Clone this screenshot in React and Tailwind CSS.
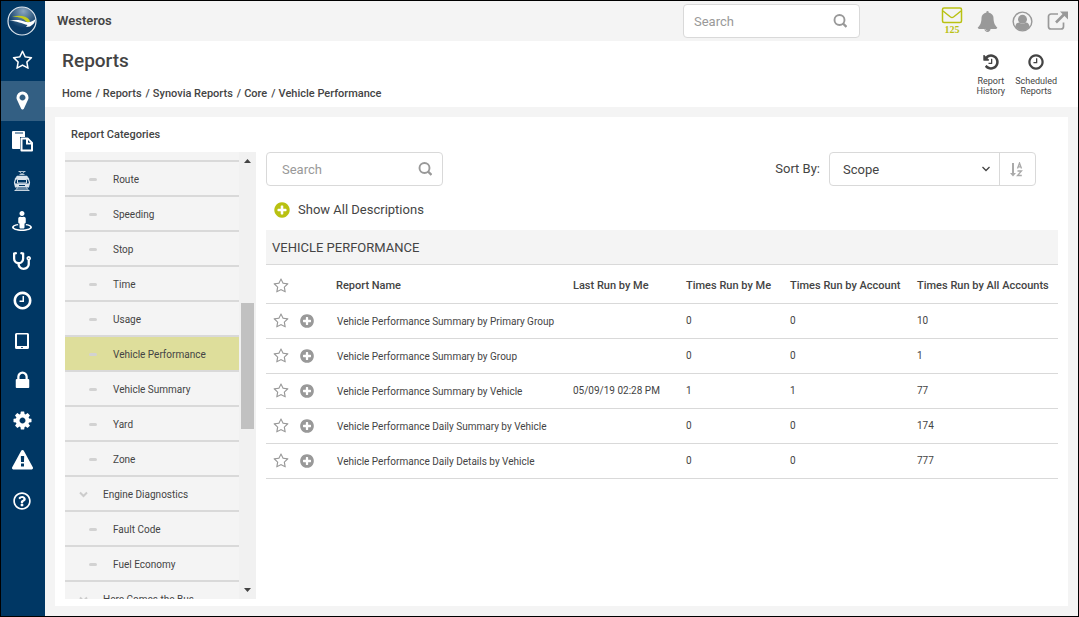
import React from "react";
import { FaStreetView, FaStethoscope, FaRegQuestionCircle } from "react-icons/fa";

const paths = {
  star: "M1137 1004l306-297-422-62-189-382-189 382-422 62 306 297-73 421 378-199 377 199zm527-357q0 22-26 48l-363 354 86 500q1 7 1 20 0 50-41 50-19 0-40-12l-449-236-449 236q-22 12-40 12-21 0-31.5-14.5t-10.5-35.5q0-6 2-20l86-500-364-354q-25-27-25-48 0-37 56-46l502-73 225-455q19-41 49-41t49 41l225 455 502 73q56 9 56 46z",
  marker: "M1152 640q0-106-75-181t-181-75-181 75-75 181 75 181 181 75 181-75 75-181zm256 0q0 109-33 179l-364 774q-16 33-47.5 52t-67.5 19-67.5-19-46.5-52l-365-774q-33-70-33-179 0-212 150-362t362-150 362 150 150 362z",
  clock: "M1024 544v448q0 14-9 23t-23 9h-320q-14 0-23-9t-9-23v-64q0-14 9-23t23-9h224v-352q0-14 9-23t23-9h64q14 0 23 9t9 23zm416 352q0-148-73-273t-198-198-273-73-273 73-198 198-73 273 73 273 198 198 273 73 273-73 198-198 73-273zm224 0q0 209-103 385.5t-279.5 279.5-385.5 103-385.5-103-279.5-279.5-103-385.5 103-385.5 279.5-279.5 385.5-103 385.5 103 279.5 279.5 103 385.5z",
  lock: "M640 768h512v-192q0-106-75-181t-181-75-181 75-75 181v192zm832 96v576q0 40-28 68t-68 28h-960q-40 0-68-28t-28-68v-576q0-40 28-68t68-28h32v-192q0-184 132-316t316-132 316 132 132 316v192h32q40 0 68 28t28 68z",
  plus: "M1344 960v-128q0-26-19-45t-45-19h-256v-256q0-26-19-45t-45-19h-128q-26 0-45 19t-19 45v256h-256q-26 0-45 19t-19 45v128q0 26 19 45t45 19h256v256q0 26 19 45t45 19h128q26 0 45-19t19-45v-256h256q26 0 45-19t19-45zm320-64q0 209-103 385.5t-279.5 279.5-385.5 103-385.5-103-279.5-279.5-103-385.5 103-385.5 279.5-279.5 385.5-103 385.5 103 279.5 279.5 103 385.5z",
  cog: "M1152 896q0-106-75-181t-181-75-181 75-75 181 75 181 181 75 181-75 75-181zm512-109v222q0 12-8 23t-20 13l-185 28q-19 54-39 91 35 50 107 138 10 12 10 25t-9 23q-27 37-99 108t-94 71q-12 0-26-9l-138-108q-44 23-91 38-16 136-29 186-7 28-36 28h-222q-14 0-24.5-8.5t-11.5-21.5l-28-184q-49-16-90-37l-141 107q-10 9-25 9-14 0-25-11-126-114-165-168-7-10-7-23 0-12 8-23 15-21 51-66.5t54-70.5q-27-50-41-99l-183-27q-13-2-21-12.5t-8-23.5v-222q0-12 8-23t19-13l186-28q14-46 39-92-40-57-107-138-10-12-10-24 0-10 9-23 26-36 98.5-107.5t94.5-71.5q13 0 26 10l138 107q44-23 91-38 16-136 29-186 7-28 36-28h222q14 0 24.5 8.5t11.5 21.5l28 184q49 16 90 37l142-107q9-9 24-9 13 0 25 10 129 119 165 170 7 8 7 22 0 12-8 23-15 21-51 66.5t-54 70.5q26 50 41 98l183 28q13 2 21 12.5t8 23.5z",
  history: "M1664 896q0 156-61 298t-164 245-245 164-298 61q-172 0-327-72.5t-264-204.5q-7-10-6.5-22.5t8.5-20.5l137-138q10-9 25-9 16 2 23 12 73 95 179 147t225 52q104 0 198.5-40.5t163.5-109.5 109.5-163.5 40.5-198.5-40.5-198.5-109.5-163.5-163.5-109.5-198.5-40.5q-98 0-188 35.5t-160 101.5l137 138q31 30 14 69-17 40-59 40h-448q-26 0-45-19t-19-45v-448q0-42 40-59 39-17 69 14l130 129q107-101 244.5-156.5t284.5-55.5q156 0 298 61t245 164 164 245 61 298zm-640-288v448q0 14-9 23t-23 9h-320q-14 0-23-9t-9-23v-64q0-14 9-23t23-9h224v-352q0-14 9-23t23-9h64q14 0 23 9t9 23z",
  warning: "M1024 1375v-190q0-14-9.5-23.5t-22.5-9.5h-192q-13 0-22.5 9.5t-9.5 23.5v190q0 14 9.5 23.5t22.5 9.5h192q13 0 22.5-9.5t9.5-23.5zm-2-374l18-459q0-12-10-19-13-11-24-11h-220q-11 0-24 11-10 7-10 21l17 457q0 10 10 16.5t24 6.5h185q14 0 23.5-6.5t10.5-16.5zm-14-934l768 1408q35 63-2 126-17 29-46.5 46t-63.5 17h-1536q-34 0-63.5-17t-46.5-46q-37-63-2-126l768-1408q17-31 47-49t65-18 65 18 47 49z",
  bell: "M912 1696q0-16-16-16-59 0-101.5-42.5t-42.5-101.5q0-16-16-16t-16 16q0 73 51.5 124.5t124.5 51.5q16 0 16-16zm816-288q0 52-38 90t-90 38h-448q0 106-75 181t-181 75-181-75-75-181h-448q-52 0-90-38t-38-90q50-42 91-88t85-119.5 74.5-158.5 50-206 19.5-260q0-152 117-282.5t307-158.5q-8-19-8-39 0-40 28-68t68-28 68 28 28 68q0 20-8 39 190 28 307 158.5t117 282.5q0 139 19.5 260t50 206 74.5 158.5 85 119.5 91 88z",
};

function Icon({ name, className }) {
  return (
    <svg viewBox={name === "star" ? "-64 0 1792 1792" : "0 0 1792 1792"} fill="currentColor" className={className} aria-hidden="true">
      <path d={paths[name]} />
    </svg>
  );
}

function Copy() {
  return (
    <svg viewBox="0 0 22 22" className="size-[22px]" aria-hidden="true">
      <path fill="currentColor" d="M2 1h11q1 0 1 1v5H9.500v12H2q-1 0-1-1V2q0-1 1-1z" />
      <path stroke="#5c809f" strokeWidth="1.500" d="M4 3h8" />
      <path fill="#003764" stroke="#003764" strokeWidth="4" d="M11 9h5.500l4 4v7H11z" />
      <path fill="none" stroke="currentColor" strokeWidth="2" strokeLinejoin="round" d="M10.500 8.500h6l4.500 4.500v7.500H10.500z" />
      <path fill="currentColor" d="M15 8h2l4.500 5v1.500H15z" />
      <path fill="#003764" d="M17 10l2.500 2.700H17z" />
    </svg>
  );
}

function Bus() {
  return (
    <svg viewBox="0 0 20 22" className="h-[22px] w-5" fill="none" stroke="#dbe4ec" aria-hidden="true">
      <path strokeWidth=".8" d="M6.500 1.500h7M7.500 1.500l2.500 3 2.500-3M7.500 4.500h5" />
      <path fill="#dbe4ec" strokeWidth=".5" d="M5 6h10l2 3H3z" />
      <path strokeWidth="1.200" d="M3.500 9h13l1 3.500-1 4.500h-13l-1-4.500z" />
      <path fill="#003764" strokeWidth="1" d="M5.500 9.500h9V13h-9z" />
      <path fill="#dbe4ec" stroke="none" d="M2.500 13.500h15l-1 3.500h-13z" />
      <path stroke="#003764" d="M7 15.500h6" />
      <path strokeWidth=".9" d="M5.500 17.500l-2 3M14.500 17.500l2 3M2.500 20.500h15M5 19h10" />
    </svg>
  );
}

function Tablet() {
  return (
    <svg viewBox="0 0 16 18" className="h-[18px] w-4" aria-hidden="true">
      <path fill="currentColor" fillRule="evenodd" d="M2.500 1h11A1.500 1.500 0 0 1 15 2.500v13a1.500 1.500 0 0 1-1.500 1.500h-11A1.500 1.500 0 0 1 1 15.500v-13A1.500 1.500 0 0 1 2.500 1zM3 2.500v11.500h10V2.500zM7.200 15v1h1.600v-1z" />
    </svg>
  );
}

function Logo() {
  return (
    <svg viewBox="0 0 30 30" className="size-[30px]" aria-hidden="true">
      <defs>
        <radialGradient id="globe" cx="0.55" cy="0.15" r="0.6">
          <stop offset="0" stopColor="#8ba6bf" />
          <stop offset="1" stopColor="#0a3a66" />
        </radialGradient>
      </defs>
      <circle cx="15" cy="15" r="14" fill="url(#globe)" stroke="#dfe7ee" strokeWidth="1.200" />
      <path fill="#c3cb1c" d="M5 10.500c8-1.500 14-1 17.500 3.500l.5 3-4-1.500c-2-3-6-4.500-14-5z" />
      <path fill="#fff" d="M2 14.500c6-1 12-1 17 1.500 4 .5 7-.5 9.500-3-.5 3-1.500 5-3.500 6l-2 1.500-4 .5 1.500-2C15 17.500 10 15 2 14.500z" />
    </svg>
  );
}

function Magnifier() {
  return (
    <svg viewBox="0 0 14 14" className="size-[14px] shrink-0 text-[#999]" fill="none" stroke="currentColor" strokeWidth="1.900" aria-hidden="true">
      <circle cx="6.500" cy="6" r="5" />
      <path strokeWidth="2.400" d="M10 9.500l3.500 3.500" />
    </svg>
  );
}

function SearchBox({ label, tone }) {
  return (
    <label className={`flex h-[34px] w-[177px] items-center rounded border border-[#d9d9d9] bg-white ${tone}`}>
      <span className="hidden">{label}</span>
      <input type="search" aria-label={label} placeholder="Search" className="h-8 w-full min-w-0 bg-transparent pt-px text-[13px] outline-none placeholder:text-[#999]" />
      <Magnifier />
    </label>
  );
}

const nav = [
  ["Favorites", <Icon name="star" className="size-[21px]" />],
  ["Map", <Icon name="marker" className="size-[21px]" />],
  ["Reports", <Copy />],
  ["Fleet", <Bus />],
  ["Tracking", <FaStreetView className="size-5" />],
  ["Diagnostics", <FaStethoscope className="size-[18px]" />],
  ["Hours", <Icon name="clock" className="size-[21px]" />],
  ["Devices", <Tablet />],
  ["Security", <Icon name="lock" className="size-[21px]" />],
  ["Settings", <Icon name="cog" className="size-[21px]" />],
  ["Alerts", <Icon name="warning" className="size-[21px]" />],
  ["Help", <FaRegQuestionCircle className="size-[18px]" />],
];

const categories = ["Route", "Speeding", "Stop", "Time", "Usage", "Vehicle Performance", "Vehicle Summary", "Yard", "Zone", "Engine Diagnostics", "Fault Code", "Fuel Economy", "Here Comes the Bus"];
const groups = ["Engine Diagnostics", "Here Comes the Bus"];

const reports = [
  ["Vehicle Performance Summary by Primary Group", "", 0, 0, 10],
  ["Vehicle Performance Summary by Group", "", 0, 0, 1],
  ["Vehicle Performance Summary by Vehicle", "05/09/19 02:28 PM", 1, 1, 77],
  ["Vehicle Performance Daily Summary by Vehicle", "", 0, 0, 174],
  ["Vehicle Performance Daily Details by Vehicle", "", 0, 0, 777],
];

const crumbs = ["Home", "Reports", "Synovia Reports", "Core", "Vehicle Performance"];

function Sidebar() {
  return (
    <nav aria-label="Main" className="w-11 shrink-0 bg-[#003764] text-white">
      <a href="#home" aria-label="Home" className="flex h-10 items-center justify-center pr-[2px]"><Logo /></a>
      {nav.map(([label, icon]) => (
        <a key={label} href={`#${label.toLowerCase()}`} aria-label={label} className={`flex h-10 items-center justify-center pb-px pr-[2px] ${label === "Map" ? "bg-[#335f83]" : ""}`}>
          {icon}
        </a>
      ))}
    </nav>
  );
}

function TopBar() {
  return (
    <div className="flex h-10 items-center justify-between bg-[#f4f4f4] pl-3 pr-[10px]">
      <span className="text-[13px] font-semibold">Westeros</span>
      <div className="flex items-center">
        <SearchBox label="Search site" tone="pl-[10px] pr-3" />
        <div className="ml-[81px] flex items-center gap-[14px] text-[#999]">
          <button type="button" aria-label="Messages" className="flex w-[22px] flex-col items-center text-[#b9c112]">
            <svg viewBox="0 0 22 17" className="h-[17px] w-[22px]" fill="none" stroke="currentColor" strokeWidth="1.500" aria-hidden="true">
              <rect x="1.500" y="1" width="19" height="14.500" rx="1.500" />
              <path d="M2 4l7.500 6q1.500 1 3 0L20 4" />
            </svg>
            <span className="font-['Liberation_Serif',serif] text-[10px] font-bold leading-3">125</span>
          </button>
          <button type="button" aria-label="Notifications"><Icon name="bell" className="size-[21px]" /></button>
          <button type="button" aria-label="Account">
            <svg viewBox="0 0 22 22" className="size-[21px]" aria-hidden="true">
              <circle cx="11" cy="11" r="9.800" fill="none" stroke="currentColor" strokeWidth="1.500" />
              <circle cx="11" cy="8.700" r="4.700" fill="currentColor" />
              <path fill="currentColor" d="M3.500 17q.5-5 4-5 3.500 3 7 0 3.500 0 4 5-7.500 7-15 0z" />
            </svg>
          </button>
          <button type="button" aria-label="Open in new window">
            <svg viewBox="0 0 21 21" className="size-[21px]" fill="none" stroke="currentColor" aria-hidden="true">
              <path strokeWidth="1.700" d="M11 3H4a2.500 2.500 0 0 0-2.500 2.500v10A2.500 2.500 0 0 0 4 18h10a2.500 2.500 0 0 0 2.500-2.500v-4" />
              <path strokeWidth="2.600" d="M9 11.500l8.500-8.500" />
              <path fill="currentColor" stroke="none" d="M13 .5h8v8z" />
            </svg>
          </button>
        </div>
      </div>
    </div>
  );
}

function PageHeader() {
  return (
    <header className="flex h-[66px] items-start justify-between bg-white pl-[17px] pr-[21px]">
      <div>
        <h1 className="pt-2 text-[19px] font-medium leading-6">Reports</h1>
        <nav aria-label="Breadcrumb" className="mt-[13px]">
          <ol className="flex gap-1 text-[11px] font-medium leading-4">
            {crumbs.map((c, i) => (
              <li key={c} className="flex gap-[3px]">
                {i > 0 && <span>/</span>}
                <a href="#crumb">{c}</a>
              </li>
            ))}
          </ol>
        </nav>
      </div>
      <div className="flex gap-[10px] pt-3 text-center text-[9px] leading-[10px]">
        <button type="button" className="flex flex-col items-center gap-[5px]"><Icon name="history" className="size-[18px]" /><span>Report<br />History</span></button>
        <button type="button" className="flex flex-col items-center gap-[5px]"><Icon name="clock" className="size-[18px]" /><span>Scheduled<br />Reports</span></button>
      </div>
    </header>
  );
}

function Categories() {
  return (
    <aside className="flex w-[191px] shrink-0 flex-col">
      <h2 className="pb-[10px] pl-[6px] pt-[11px] text-[11px] font-medium leading-[14px]">Report Categories</h2>
      <div className="flex min-h-0 flex-1">
        <ul className="h-[447px] w-[174px] overflow-hidden bg-[#f4f4f4] pt-2 text-[10px]">
          {categories.map((c) => {
            const group = groups.includes(c);
            return (
              <li key={c} className="border-t-2 border-[#d9d9d9]">
                <a href="#category" className={`flex h-[33px] items-center pt-[2px] ${c === "Vehicle Performance" ? "bg-[#dede9b]" : ""} ${group ? "gap-[15px] pl-[14px]" : "gap-4 pl-6"}`}>
                  {group ? (
                    <svg viewBox="0 0 9 7" className="h-[7px] w-[9px]" fill="none" stroke="#ccc" strokeWidth="2" aria-hidden="true"><path d="M1 1.500l3.500 3.500L8 1.500" /></svg>
                  ) : (
                    <span className="h-[3px] w-2 rounded-full bg-[#d2d2d2]" />
                  )}
                  {c}
                </a>
              </li>
            );
          })}
        </ul>
        <div className="flex w-[17px] flex-col items-center bg-[#f1f1f1] py-[7px]" aria-hidden="true">
          <svg viewBox="0 0 7 4" className="h-1 w-[7px]" fill="#444"><path d="M0 4l3.500-4L7 4z" /></svg>
          <div className="mt-[140px] h-[126px] w-[13px] bg-[#c1c1c1]" />
          <svg viewBox="0 0 7 4" className="mt-auto h-1 w-[7px]" fill="#444"><path d="M0 0l3.500 4L7 0z" /></svg>
        </div>
      </div>
    </aside>
  );
}

function ReportList() {
  return (
    <section className="min-w-0 flex-1 pt-[35px]">
      <div className="flex items-center justify-between pr-[22px]">
        <SearchBox label="Search reports" tone="pl-[15px] pr-[10px]" />
        <div className="flex items-center">
          <label htmlFor="sort" className="mr-[9px] text-[13px]">Sort By:</label>
          <div className="flex h-[34px] items-center rounded border border-[#d9d9d9]">
            <div className="grid items-center">
              <select id="sort" defaultValue="Scope" className="col-start-1 row-start-1 h-8 w-[169px] appearance-none bg-transparent pl-[13px] pt-px text-[13px] outline-none">
                <option>Scope</option>
                <option>Name</option>
              </select>
              <svg viewBox="0 0 8 6" className="pointer-events-none col-start-1 row-start-1 mr-[9px] h-[6px] w-2 justify-self-end" fill="none" stroke="#444" strokeWidth="1.300" aria-hidden="true"><path d="M.500 1L4 4.500 7.500 1" /></svg>
            </div>
            <button type="button" aria-label="Sort ascending" className="flex h-full w-9 items-center justify-center border-l border-[#d9d9d9] pr-[3px] text-[#aaa]">
              <svg viewBox="0 0 13 15" className="h-[15px] w-[13px]" fill="none" stroke="currentColor" strokeWidth="1.300" aria-hidden="true">
                <path strokeWidth="2" d="M3 1v11" />
                <path fill="currentColor" stroke="none" d="M0 11h6L3 14.500z" />
                <path d="M7.500 6.500L9.500 1l2 5.500M8 4.800h3M7.500 9h4l-4 4.500h4.300" />
              </svg>
            </button>
          </div>
        </div>
      </div>
      <button type="button" className="mt-[13px] flex h-[22px] items-center gap-[7px] pl-[7px] text-[13px]">
        <Icon name="plus" className="size-[18px] text-[#b9c112]" />
        Show All Descriptions
      </button>
      <h2 className="mt-[9px] flex h-[35px] items-center border-b border-[#d9d9d9] bg-[#f4f4f4] pl-[6px] pt-px text-[13px]">VEHICLE PERFORMANCE</h2>
      <table className="w-full table-fixed border-collapse text-left text-[10px]">
        <colgroup>
          <col className="w-[30px]" />
          <col className="w-10" />
          <col className="w-[237px]" />
          <col className="w-[113px]" />
          <col className="w-[104px]" />
          <col className="w-[127px]" />
          <col />
        </colgroup>
        <thead>
          <tr className="h-[38px] border-b border-[#d9d9d9] text-[11px] [&>th]:p-0 [&>th]:pt-1 [&>th]:font-medium">
            <th><button type="button" aria-label="Favorite all" className="block pl-[7px] text-[#999]"><Icon name="star" className="size-4" /></button></th>
            <th aria-label="Expand" />
            <th>Report Name</th>
            <th>Last Run by Me</th>
            <th>Times Run by Me</th>
            <th>Times Run by Account</th>
            <th>Times Run by All Accounts</th>
          </tr>
        </thead>
        <tbody>
          {reports.map(([name, ...cells]) => (
            <tr key={name} className="h-[35px] border-b border-[#d9d9d9] [&>td]:p-0">
              <td><button type="button" aria-label={`Favorite ${name}`} className="block pl-[7px] text-[#999]"><Icon name="star" className="size-4" /></button></td>
              <td><button type="button" aria-label={`Expand ${name}`} className="block pl-[3px] text-[#999]"><Icon name="plus" className="size-4" /></button></td>
              <td><a href="#report" className="block pl-px pt-px">{name}</a></td>
              {cells.map((v, i) => <td key={i}>{v}</td>)}
            </tr>
          ))}
        </tbody>
      </table>
    </section>
  );
}

export default function App() {
  return (
    <div className="flex min-h-screen border border-black bg-[#f4f4f4] font-[Roboto,sans-serif] text-[#444]">
      <Sidebar />
      <div className="flex min-w-0 flex-1 flex-col">
        <TopBar />
        <PageHeader />
        <main className="m-[10px] flex flex-1 gap-[10px] bg-white px-[10px] pb-[7px]">
          <Categories />
          <ReportList />
        </main>
      </div>
    </div>
  );
}
